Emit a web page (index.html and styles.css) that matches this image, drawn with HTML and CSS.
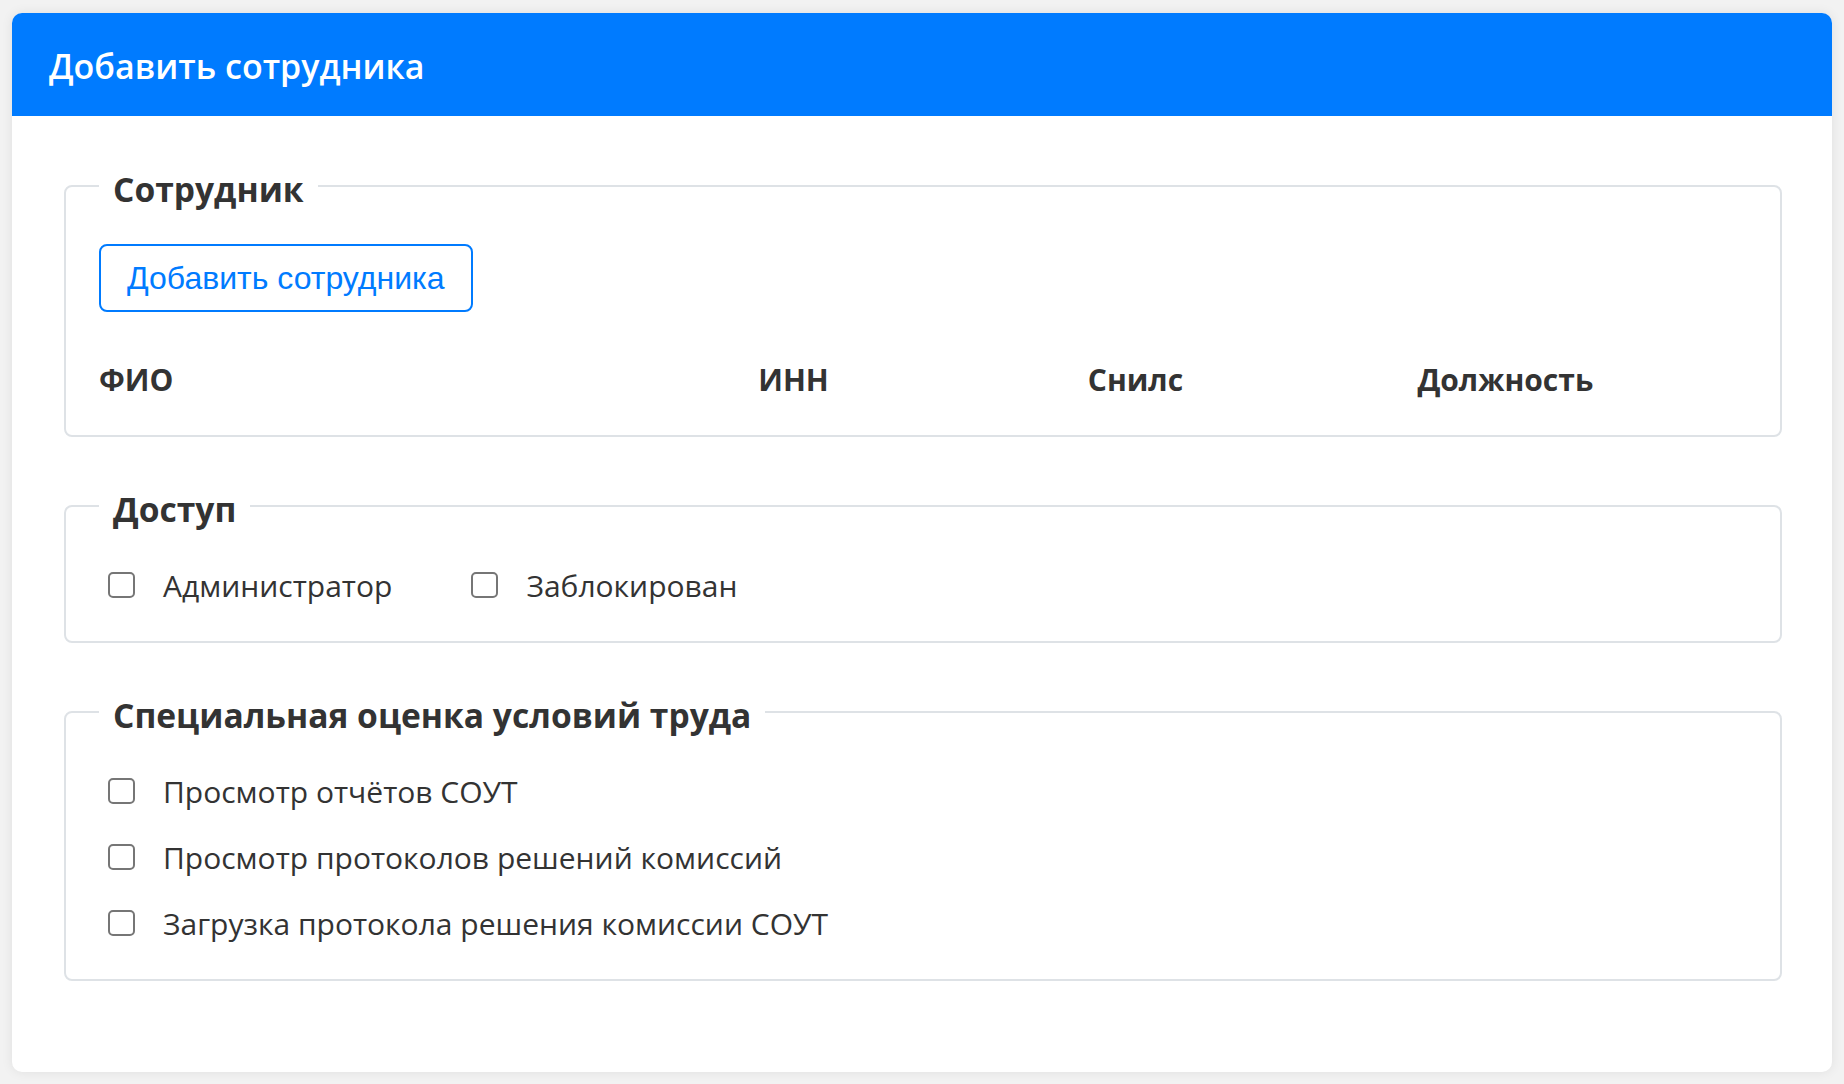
FILE: index.html
```html
<!DOCTYPE html>
<html lang="ru">
<head>
  <meta charset="UTF-8">
  <title>Добавить сотрудника</title>
  <meta name="viewport" content="width=device-width, initial-scale=1.0">
  <link rel="stylesheet" href="styles.css">
</head>
<body>

<div class="card">
  <div class="card-header">
    <h5 class="card-title">Добавить сотрудника</h5>
  </div>

  <form class="card-body" onsubmit="return false;">
    <!-- Сотрудник -->
    <fieldset class="group">
      <legend>Сотрудник</legend>
      <button type="button" class="btn-outline">Добавить сотрудника</button>
      <table class="staff-table">
        <thead>
          <tr>
            <th class="col-name">ФИО</th>
            <th>ИНН</th>
            <th>Снилс</th>
            <th>Должность</th>
          </tr>
        </thead>
        <tbody>
          <!-- сотрудники появятся здесь -->
        </tbody>
      </table>
    </fieldset>

    <!-- Доступ -->
    <fieldset class="group">
      <legend>Доступ</legend>
      <div class="check-inline">
        <label class="check"><input type="checkbox" id="isAdmin"> Администратор</label>
        <label class="check"><input type="checkbox" id="isBlocked"> Заблокирован</label>
      </div>
    </fieldset>

    <!-- СОУТ -->
    <fieldset class="group">
      <legend>Специальная оценка условий труда</legend>
      <div class="check-list">
        <label class="check"><input type="checkbox" id="soutReports"> Просмотр отчётов СОУТ</label>
        <label class="check"><input type="checkbox" id="soutProtocols"> Просмотр протоколов решений комиссий</label>
        <label class="check"><input type="checkbox" id="soutUpload"> Загрузка протокола решения комиссии СОУТ</label>
      </div>
    </fieldset>
  </form>
</div>

</body>
</html>
```

FILE: styles.css
```css
html, body { height: 100%; }
body {
  margin: 0;
  padding: 13px 12px 12px;
  box-sizing: border-box;
  background: #f2f2f2;
  font-family: "Open Sans", "Noto Sans", sans-serif;
  color: #333;
}

.card {
  height: 100%;
  background: #fff;
  border-radius: 10px;
  box-shadow: 0 0 12px rgba(0, 0, 0, 0.08);
  overflow: hidden;
}
.card-header {
  height: 103px;
  box-sizing: border-box;
  display: flex;
  align-items: center;
  padding: 4px 0 0 37px;
  background-color: #007bff;
}
.card-title {
  margin: 0;
  color: #fff;
  font-size: 34px;
  font-weight: 600;
  line-height: 1.2;
}

.card-body {
  display: block;
  padding: 47px 50px 0 52px;
}

.group {
  margin: 0 0 46px;
  padding: 0 33px 33px;
  border: 2px solid #dee2e6;
  border-radius: 8px;
}
.group legend {
  padding: 6px 14px 0;
  font-size: 33.6px;
  font-weight: 700;
  line-height: 40px;
}

.btn-outline {
  display: block;
  margin-top: 35px;
  padding: 10px 26px;
  font-family: "Liberation Sans", Arial, sans-serif;
  font-size: 32px;
  line-height: 44px;
  color: #007bff;
  background: #fff;
  border: 2px solid #007bff;
  border-radius: 8px;
  cursor: pointer;
}
.btn-outline:hover {
  color: #fff;
  background-color: #007bff;
}

.staff-table {
  width: 100%;
  margin-top: 44px;
  border-collapse: collapse;
}
.staff-table th {
  width: 20%;
  padding: 0;
  height: 46px;
  text-align: left;
  font-size: 30px;
  font-weight: 700;
}
.staff-table th.col-name { width: 40%; }

.check-inline {
  display: flex;
  gap: 70px;
  margin-top: 33px;
}
.check-list {
  display: flex;
  flex-direction: column;
  gap: 20px;
  margin-top: 33px;
}
.check {
  display: flex;
  align-items: center;
  gap: 28px;
  height: 46px;
  padding-left: 9px;
  font-size: 30px;
}
.check input[type="checkbox"] {
  appearance: none;
  -webkit-appearance: none;
  flex: none;
  width: 27px;
  height: 26px;
  margin: 0;
  border: 2px solid #767676;
  border-radius: 5px;
  background: #fff;
}
.check input[type="checkbox"]:checked {
  background: #007bff;
  border-color: #007bff;
}
```
